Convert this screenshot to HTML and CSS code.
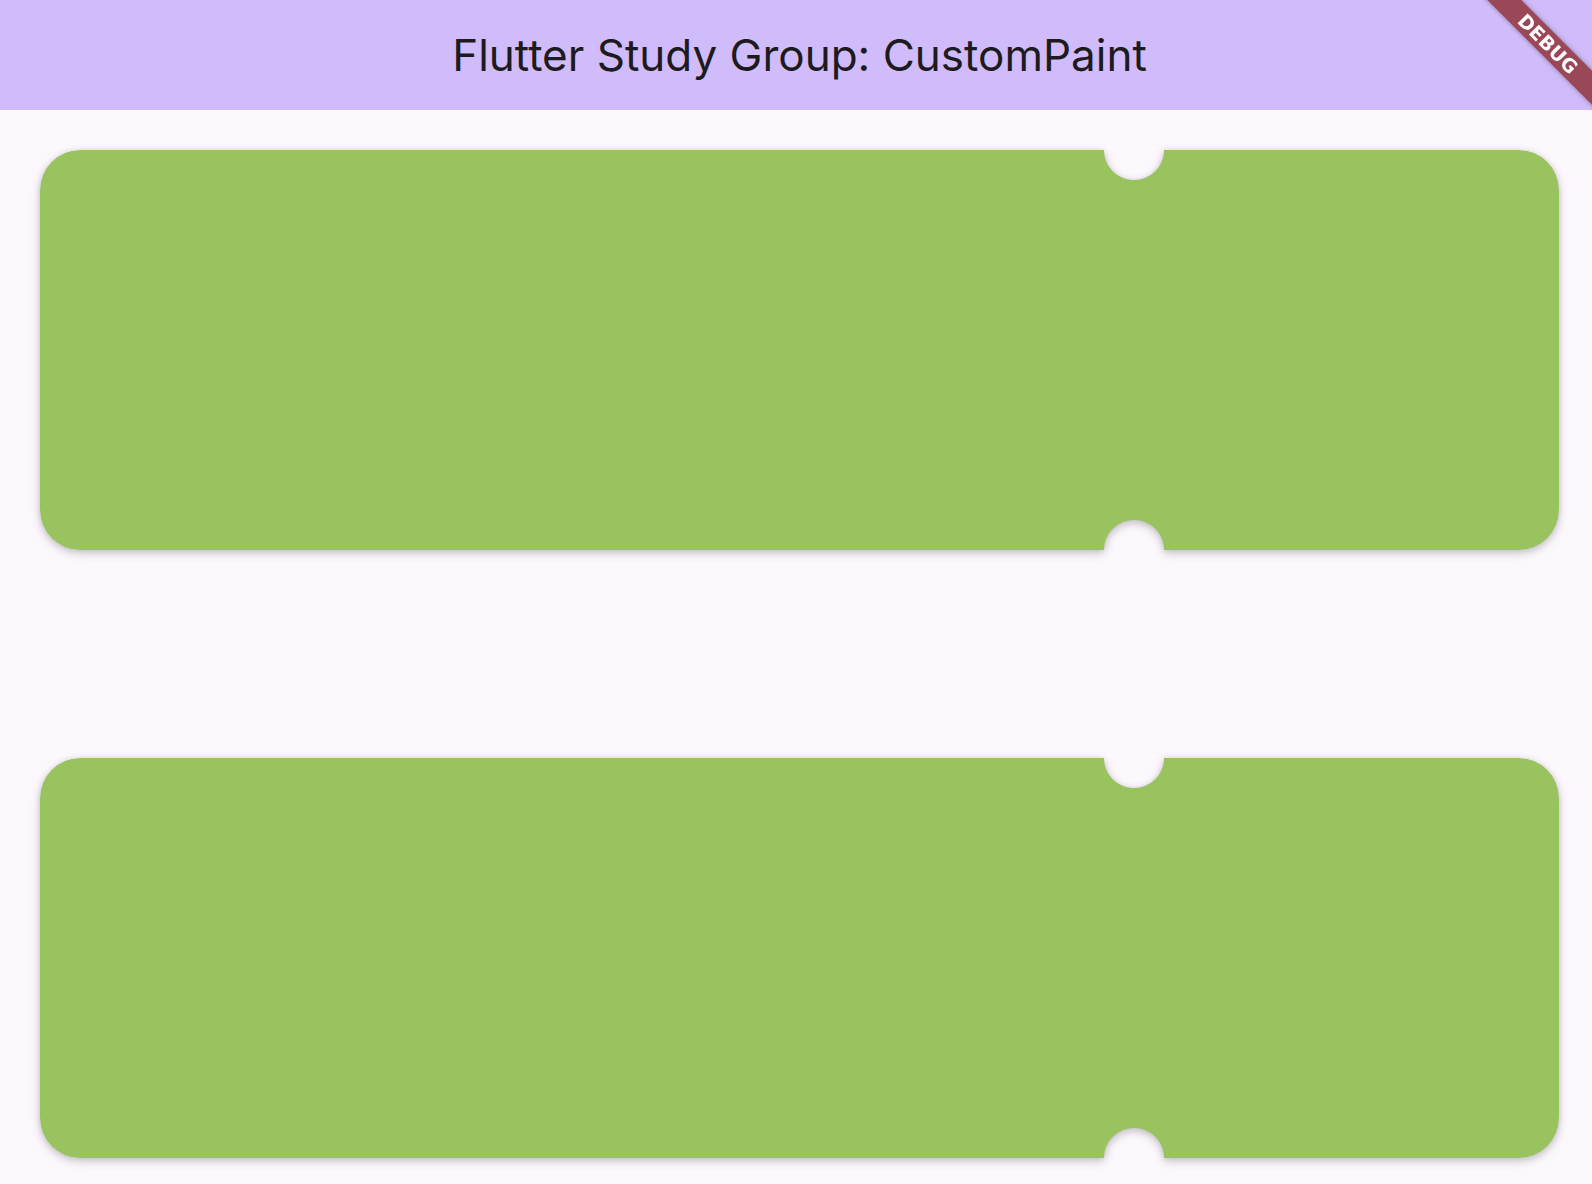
FILE: index.html
```html
<!DOCTYPE html>
<html lang="en">
<head>
<meta charset="utf-8">
<title>Flutter Study Group: CustomPaint</title>
<link rel="stylesheet" href="styles.css">
</head>
<body>
  <header class="app-bar">
    <h1 class="app-title">Flutter Study Group: CustomPaint</h1>
  </header>
  <main class="content">
    <div class="ticket-wrap"><div class="ticket"></div></div>
    <div class="ticket-wrap"><div class="ticket"></div></div>
  </main>
  <div class="banner-layer">
    <div class="debug-banner">DEBUG</div>
  </div>
</body>
</html>
```
FILE: styles.css
```css
html, body {
  margin: 0;
  padding: 0;
  width: 1592px;
  height: 1184px;
  overflow: hidden;
  background: #fdf8fd;
  font-family: Inter, Roboto, "Noto Sans", sans-serif;
}

.app-bar {
  height: 110px;
  background: #d0bcfb;
  display: flex;
  align-items: center;
  justify-content: center;
}

.app-title {
  margin: 0;
  font-size: 44px;
  font-weight: 400;
  line-height: 1;
  color: #1d1b20;
  padding-bottom: 1px;
  padding-left: 7px;
}

.content {
  padding: 40px 33px 0 40px;
  display: flex;
  flex-direction: column;
  gap: 208px;
}

.ticket-wrap {
  filter: drop-shadow(0 3px 5px rgba(0, 0, 0, 0.22)) drop-shadow(0 0 2px rgba(0, 0, 0, 0.08));
}

.ticket {
  height: 400px;
  background: #99c35f;
  border-radius: 40px;
  -webkit-mask:
    radial-gradient(circle at 1094px 0, transparent 29.5px, #000 30.5px) top / 100% 50% no-repeat,
    radial-gradient(circle at 1094px 100%, transparent 29.5px, #000 30.5px) bottom / 100% 50% no-repeat;
  mask:
    radial-gradient(circle at 1094px 0, transparent 29.5px, #000 30.5px) top / 100% 50% no-repeat,
    radial-gradient(circle at 1094px 100%, transparent 29.5px, #000 30.5px) bottom / 100% 50% no-repeat;
}

.banner-layer {
  position: fixed;
  inset: 0;
  overflow: hidden;
  pointer-events: none;
}

.debug-banner {
  position: absolute;
  left: 1512px;
  top: 50px;
  width: 160px;
  height: 24px;
  transform-origin: 80px -50px;
  transform: rotate(45deg);
  background: #9a4858;
  box-shadow: 0 0 5px rgba(0, 0, 0, 0.35);
  color: #fff;
  font-family: "DejaVu Sans", "Liberation Sans", sans-serif;
  font-weight: 900;
  font-size: 19px;
  line-height: 24px;
  text-align: center;
  letter-spacing: 0.3px;
}
```
